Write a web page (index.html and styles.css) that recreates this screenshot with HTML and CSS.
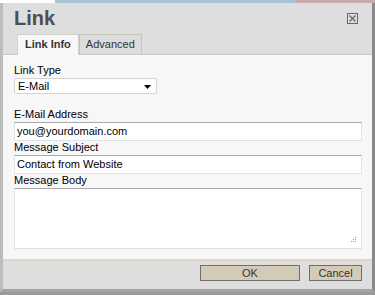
FILE: index.html
```html
<!DOCTYPE html>
<html>
<head>
<meta charset="utf-8">
<link rel="stylesheet" href="styles.css">
</head>
<body>
<div class="backdrop">
  <div class="bd-white"></div>
  <div class="bd-blue"></div>
  <div class="bd-pink"></div>
</div>
<div class="dialog">
  <div class="header">
    <div class="title-row">
      <div class="title">Link</div>
      <div class="close">
        <svg width="11" height="11" viewBox="0 0 11 11">
          <rect x="0.5" y="0.5" width="10" height="10" fill="none" stroke="#666" stroke-width="1"/>
          <path d="M2.5 2.5 L8.5 8.5 M8.5 2.5 L2.5 8.5" stroke="#666" stroke-width="1.3"/>
        </svg>
      </div>
    </div>
    <div class="tabs">
      <div class="tab active">Link Info</div>
      <div class="tab">Advanced</div>
    </div>
  </div>
  <div class="body">
    <div class="label">Link Type</div>
    <div class="select">
      <span>E-Mail</span>
      <svg class="arrow" width="7" height="4" viewBox="0 0 7 4"><path d="M0 0 H7 L3.5 4 Z" fill="#000"/></svg>
    </div>
    <div class="label spaced">E-Mail Address</div>
    <div class="input">you@yourdomain.com</div>
    <div class="label">Message Subject</div>
    <div class="input">Contact from Website</div>
    <div class="label">Message Body</div>
    <div class="textarea">
      <svg class="grip" width="7" height="7" viewBox="0 0 7 7">
        <rect x="5" y="0" width="1" height="1" fill="#999"/>
        <rect x="5" y="2" width="1" height="1" fill="#999"/>
        <rect x="3" y="2" width="1" height="1" fill="#999"/>
        <rect x="5" y="4" width="1" height="1" fill="#999"/>
        <rect x="3" y="4" width="1" height="1" fill="#999"/>
        <rect x="1" y="4" width="1" height="1" fill="#999"/>
      </svg>
    </div>
  </div>
  <div class="footer">
    <div class="btn ok">OK</div>
    <div class="btn cancel">Cancel</div>
  </div>
</div>
</body>
</html>
```
FILE: styles.css
```css
html, body {
  margin: 0;
  padding: 0;
  width: 375px;
  height: 295px;
  overflow: hidden;
  background: #9a9a9a;
  font-family: "Liberation Sans", Arial, sans-serif;
}
.backdrop {
  display: flex;
  height: 3px;
}
.bd-white { width: 55px; background: #ffffff; }
.bd-blue { width: 240px; background: #a9c3d6; }
.bd-pink { flex: 1; background: #c9a9ab; }
.dialog {
  width: 369px;
  border-left: 3px solid #bcbcbc;
  border-right: 3px solid #8a8a8a;
  border-bottom: 3px solid #a4a4a4;
  background: #dedede;
}
.header {
  height: 51px;
  border-bottom: 1px solid #c9c9c9;
  display: flex;
  flex-direction: column;
  justify-content: space-between;
}
.title-row {
  display: flex;
  justify-content: space-between;
  align-items: flex-start;
  padding: 3px 14px 0 11px;
}
.title {
  font-size: 20px;
  line-height: 24px;
  font-weight: bold;
  color: #4e4e4e;
}
.close {
  margin-top: 7px;
  height: 11px;
}
.close svg { display: block; }
.tabs {
  display: flex;
  padding-left: 14px;
  margin-bottom: -1px;
}
.tab {
  height: 19px;
  line-height: 19px;
  padding: 0 6px;
  font-size: 11px;
  color: #333;
  border: 1px solid #cbc3b3;
  border-bottom: none;
  background: #dcdcdc;
}
.tab.active {
  height: 20px;
  font-weight: bold;
  background: #f7f7f7;
  padding: 0 7px;
  border-color: #d3d0c8;
}
.body {
  background: #f7f7f7;
  height: 204px;
  padding: 9px 10px 0 11px;
  box-sizing: border-box;
}
.label {
  font-size: 11px;
  line-height: 13px;
  height: 14px;
  color: #000;
}
.label.spaced { margin-top: 14px; }
.select {
  width: 143px;
  height: 16px;
  box-sizing: border-box;
  border: 1px solid #d4d4d4;
  border-radius: 2px;
  background: #fff;
  display: flex;
  align-items: center;
  justify-content: space-between;
  padding: 0 5px 0 3px;
  font-size: 11px;
  color: #000;
}
.arrow { display: block; margin-top: 1px; }
.input {
  height: 19px;
  box-sizing: border-box;
  border: 1px solid #dde1ea;
  border-top-color: #a8a8ae;
  background: #fff;
  font-size: 11px;
  line-height: 17px;
  padding-left: 2px;
  color: #000;
  margin-bottom: 0;
}
.textarea {
  position: relative;
  height: 61px;
  box-sizing: border-box;
  border: 1px solid #dde1ea;
  border-top-color: #a8a8ae;
  background: #fff;
}
.grip {
  position: absolute;
  right: 4px;
  bottom: 4px;
}
.footer {
  height: 30px;
  border-top: 2px solid #e2d5c6;
  box-sizing: border-box;
  display: flex;
  justify-content: flex-end;
  align-items: flex-start;
  padding: 4px 10px 0 0;
  gap: 9px;
}
.btn {
  height: 16px;
  box-sizing: border-box;
  border: 1px solid #6e6e6e;
  background: #d3cbb8;
  font-size: 11px;
  line-height: 14px;
  text-align: center;
  color: #333;
}
.ok { width: 100px; }
.cancel { width: 53px; }
```
